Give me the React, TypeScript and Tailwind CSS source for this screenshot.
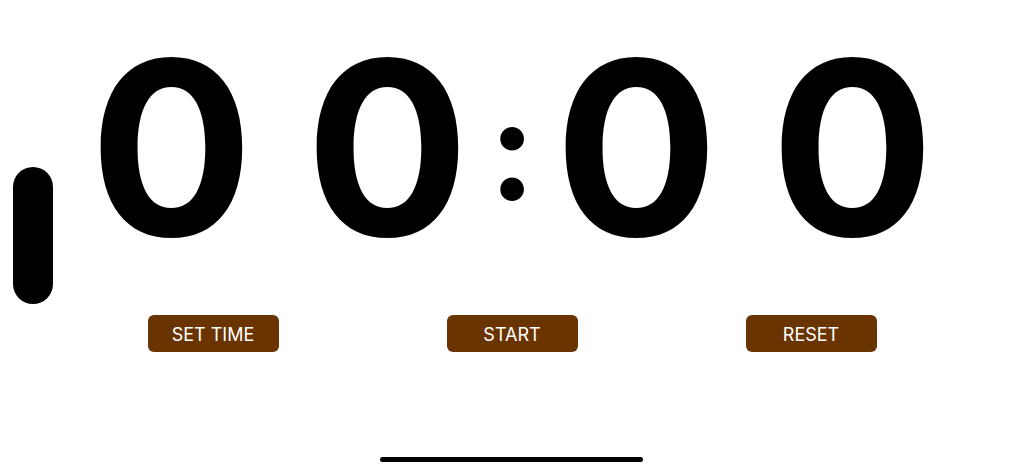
import { ReactNode } from "react"

// Landscape countdown timer: big mm:ss readout with three action buttons.
function Digit({ children }: { children: ReactNode }) {
  return <span className="flex w-[216px] justify-center">{children}</span>
}

function ActionButton({ label }: { label: string }) {
  return (
    <button className="flex h-[37px] w-[131px] items-center justify-center rounded-[6px] bg-[#6a3400] pt-[2px] text-[18px] text-white">
      {label}
    </button>
  )
}

export default function App() {
  return (
    <div className="relative h-[472px] w-full overflow-hidden bg-white font-['Inter',sans-serif]">
      {/* sensor housing */}
      <div className="absolute left-[13px] top-[167px] h-[137px] w-[40px] rounded-full bg-black" />

      <div className="flex flex-col items-center pt-[27px]">
        <div className="flex items-center text-[243px] font-bold leading-none text-black">
          <Digit>0</Digit>
          <Digit>0</Digit>
          <span className="flex w-[33px] justify-center text-[140px]">:</span>
          <Digit>0</Digit>
          <Digit>0</Digit>
        </div>

        <div className="mt-[45px] flex w-full justify-center gap-[168px]">
          <ActionButton label="SET TIME" />
          <ActionButton label="START" />
          <ActionButton label="RESET" />
        </div>
      </div>

      {/* home indicator */}
      <div className="absolute bottom-[10px] left-[380px] h-[5px] w-[263px] rounded-full bg-black" />
    </div>
  )
}
